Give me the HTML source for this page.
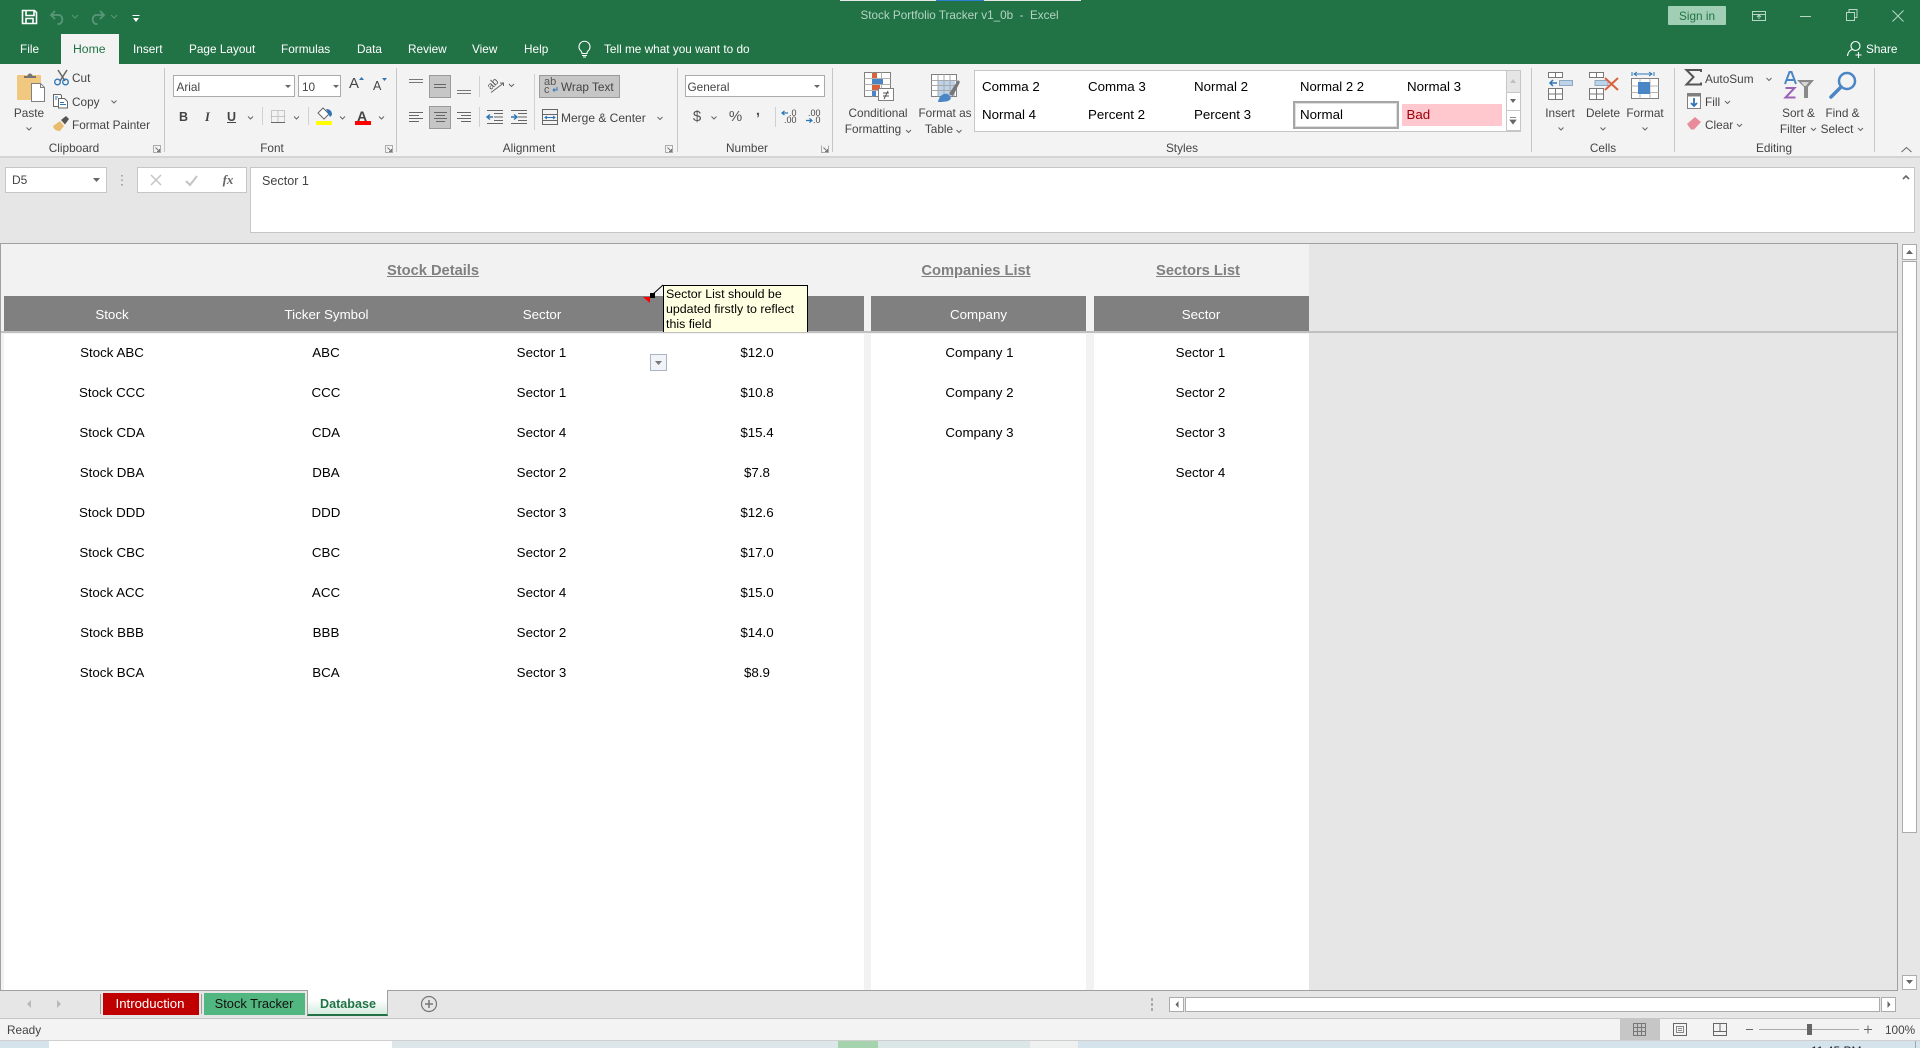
<!DOCTYPE html>
<html lang="en">
<head>
<meta charset="utf-8">
<title>Stock Portfolio Tracker v1_0b - Excel</title>
<style>
html,body{margin:0;padding:0;width:1920px;height:1048px;overflow:hidden;background:#e6e6e6}
body{position:relative;font-family:"Liberation Sans",Arial,sans-serif;font-size:11.8px;color:#444}
.b{position:absolute;box-sizing:border-box}
.t{position:absolute;line-height:16px;white-space:nowrap}
.c{transform:translateX(-50%)}
.w{color:#fff}
.cell{color:#000;font-size:13.33px}
.hd{color:#fff;font-size:13.33px}
.ttl{color:#808080;font-size:14.67px;font-weight:bold;text-decoration:underline}
.st{color:#000;font-size:13.33px}
.in{background:#fff;border:1px solid #ababab}
.sel{background:#c6c6c6;border:1px solid #9a9a9a}
svg{position:absolute;left:0;top:0;overflow:visible}
</style>
</head>
<body>
<!-- regions -->
<div class="b" style="left:0;top:0;width:1920px;height:64px;background:#217346"></div>
<div class="b" style="left:840px;top:0;width:96px;height:1px;background:#e8e8e8"></div>
<div class="b" style="left:936px;top:0;width:48px;height:1px;background:#2b7cd3"></div>
<div class="b" style="left:984px;top:0;width:97px;height:1px;background:#e8e8e8"></div>
<div class="b" style="left:61px;top:34px;width:58px;height:30px;background:#f3f3f3"></div>
<div class="b" style="left:0;top:64px;width:1920px;height:92px;background:#f3f3f3"></div>
<div class="b" style="left:0;top:156px;width:1920px;height:2px;background:#d4d4d4"></div>

<!-- title bar -->
<div class="t c" style="left:959.500px;top:8px;color:#b4d4c3;font-size:11.700px">Stock Portfolio Tracker v1_0b&nbsp; -&nbsp; Excel</div>
<div class="b" style="left:1668px;top:6px;width:58px;height:19px;background:#a0cfb5;border-radius:1px"></div>
<div class="t c" style="left:1697px;top:8px;color:#217346;font-size:11.8px">Sign in</div>

<!-- tabs -->
<div class="t w" style="left:20px;top:41px">File</div>
<div class="t" style="left:73px;top:41px;color:#217346;font-size:12.2px">Home</div>
<div class="t w" style="left:133px;top:41px">Insert</div>
<div class="t w" style="left:189px;top:41px">Page Layout</div>
<div class="t w" style="left:281px;top:41px">Formulas</div>
<div class="t w" style="left:357px;top:41px">Data</div>
<div class="t w" style="left:408px;top:41px">Review</div>
<div class="t w" style="left:472px;top:41px">View</div>
<div class="t w" style="left:524px;top:41px">Help</div>
<div class="t w" style="left:604px;top:41px">Tell me what you want to do</div>
<div class="t w" style="left:1866px;top:41px">Share</div>

<!-- Clipboard -->
<div class="t c" style="left:29px;top:105px">Paste</div>
<div class="t" style="left:72px;top:70px">Cut</div>
<div class="t" style="left:72px;top:94px">Copy</div>
<div class="t" style="left:72px;top:117px">Format Painter</div>
<div class="t c" style="left:74px;top:140px">Clipboard</div>

<!-- Font -->
<div class="b in" style="left:173px;top:75px;width:122px;height:22px"></div>
<div class="t" style="left:176.500px;top:79px">Arial</div>
<div class="b in" style="left:298px;top:75px;width:43px;height:22px"></div>
<div class="t" style="left:302px;top:79px">10</div>
<div class="t" style="left:349px;top:76px;font-size:15px">A</div>
<div class="t" style="left:373px;top:78px;font-size:12.5px">A</div>
<div class="t" style="left:179px;top:109px;font-weight:bold;font-size:12.5px">B</div>
<div class="t" style="left:205px;top:109px;font-style:italic;font-size:12.5px;font-family:'Liberation Serif',serif;font-weight:bold">I</div>
<div class="t" style="left:227px;top:109px;font-weight:bold;font-size:12.5px;text-decoration:underline">U</div>
<div class="t" style="left:357px;top:108px;font-weight:bold;font-size:14px;color:#444">A</div>
<div class="t c" style="left:272px;top:140px">Font</div>

<!-- Alignment -->
<div class="b sel" style="left:429px;top:75px;width:22px;height:23px"></div>
<div class="b sel" style="left:429px;top:106px;width:22px;height:23px"></div>
<div class="b sel" style="left:539px;top:75px;width:81px;height:23px"></div>
<div class="t" style="left:561px;top:79px">Wrap Text</div>
<div class="t" style="left:561px;top:110px;font-size:12px">Merge &amp; Center</div>
<div class="t" style="left:544px;top:77px;font-size:11px;line-height:10px;color:#555">ab</div>
<div class="t" style="left:544px;top:85px;font-size:11px;line-height:10px;color:#555">c</div>
<div class="t" style="left:487px;top:79px;font-size:10.5px;line-height:10px;color:#555;transform:rotate(-45deg)">ab</div>
<div class="t c" style="left:529px;top:140px">Alignment</div>

<!-- Number -->
<div class="b in" style="left:685px;top:75px;width:140px;height:22px"></div>
<div class="t" style="left:687.500px;top:79px">General</div>
<div class="t c" style="left:697px;top:109px;font-size:15px;color:#555">$</div>
<div class="t c" style="left:735.500px;top:109px;font-size:15px;color:#555">%</div>
<div class="t c" style="left:758px;top:103px;font-size:15px;font-weight:bold;color:#555">,</div>
<div class="t" style="left:789px;top:109px;font-size:9px;line-height:8px;color:#444">.0</div>
<div class="t" style="left:784px;top:116px;font-size:9px;line-height:8px;color:#444">.00</div>
<div class="t" style="left:808px;top:109px;font-size:9px;line-height:8px;color:#444">.00</div>
<div class="t" style="left:813px;top:116px;font-size:9px;line-height:8px;color:#444">.0</div>
<div class="t c" style="left:747px;top:140px">Number</div>

<!-- Styles -->
<div class="t c" style="left:878px;top:105px">Conditional</div>
<div class="t c" style="left:873px;top:121px">Formatting</div>
<div class="t c" style="left:945px;top:105px">Format as</div>
<div class="t c" style="left:939px;top:121px">Table</div>
<div class="b" style="left:974px;top:70px;width:547px;height:62px;background:#fff;border:1px solid #c6c6c6"></div>
<div class="t st" style="left:982px;top:79px">Comma 2</div>
<div class="t st" style="left:1088px;top:79px">Comma 3</div>
<div class="t st" style="left:1194px;top:79px">Normal 2</div>
<div class="t st" style="left:1300px;top:79px;font-size:13.1px">Normal 2 2</div>
<div class="t st" style="left:1407px;top:79px">Normal 3</div>
<div class="t st" style="left:982px;top:107px">Normal 4</div>
<div class="t st" style="left:1088px;top:107px">Percent 2</div>
<div class="t st" style="left:1194px;top:107px">Percent 3</div>
<div class="b" style="left:1293px;top:101px;width:106px;height:28px;background:#fff;border:2px solid #a6a6a6;box-shadow:inset 0 0 0 1px #e0e0e0"></div>
<div class="t st" style="left:1300px;top:107px">Normal</div>
<div class="b" style="left:1402px;top:104px;width:100px;height:22px;background:#ffc7ce"></div>
<div class="t st" style="left:1406.500px;top:107px;color:#9c0006">Bad</div>
<div class="b" style="left:1506px;top:71px;width:14px;height:21px;background:#e6e6e6;border-left:1px solid #c6c6c6"></div>
<div class="b" style="left:1506px;top:92px;width:14px;height:19px;background:#fff;border:1px solid #c6c6c6;border-right:0"></div>
<div class="b" style="left:1506px;top:110px;width:14px;height:21px;background:#fff;border:1px solid #c6c6c6;border-right:0"></div>
<div class="t c" style="left:1182px;top:140px">Styles</div>

<!-- Cells / Editing -->
<div class="t c" style="left:1560px;top:105px">Insert</div>
<div class="t c" style="left:1603px;top:105px">Delete</div>
<div class="t c" style="left:1645px;top:105px">Format</div>
<div class="t c" style="left:1603px;top:140px">Cells</div>
<div class="t" style="left:1705px;top:71px">AutoSum</div>
<div class="t" style="left:1705px;top:94px">Fill</div>
<div class="t" style="left:1705px;top:117px">Clear</div>
<div class="t c" style="left:1798.500px;top:105px">Sort &amp;</div>
<div class="t c" style="left:1793px;top:121px">Filter</div>
<div class="t c" style="left:1842.500px;top:105px">Find &amp;</div>
<div class="t c" style="left:1837px;top:121px">Select</div>
<div class="t c" style="left:1774px;top:140px">Editing</div>

<!-- formula bar -->
<div class="b" style="left:5px;top:167px;width:102px;height:26px;background:#fff;border:1px solid #c6c6c6"></div>
<div class="t" style="left:12px;top:172px;font-size:12px">D5</div>
<div class="b" style="left:137px;top:167px;width:110px;height:26px;background:#fff;border:1px solid #c6c6c6"></div>
<div class="t c" style="left:228px;top:172px;font-family:'Liberation Serif',serif;font-style:italic;font-weight:bold;font-size:13px;color:#666">fx</div>
<div class="b" style="left:250px;top:167px;width:1665px;height:66px;background:#fff;border:1px solid #c6c6c6"></div>
<div class="t" style="left:262px;top:172.500px;font-size:12.6px">Sector 1</div>

<!-- sheet -->
<div class="b" style="left:0;top:243px;width:1898px;height:748px;background:#e6e6e6;border:1px solid #a0a0a0;border-width:1px 1px 1px 1px"></div>
<div class="b" style="left:1px;top:244px;width:1308px;height:746px;background:#f2f2f2"></div>
<div class="b" style="left:4px;top:334px;width:860px;height:656px;background:#fff"></div>
<div class="b" style="left:871px;top:334px;width:215px;height:656px;background:#fff"></div>
<div class="b" style="left:1094px;top:334px;width:215px;height:656px;background:#fff"></div>
<div class="b" style="left:4px;top:296px;width:860px;height:35px;background:#808080"></div>
<div class="b" style="left:871px;top:296px;width:215px;height:35px;background:#808080"></div>
<div class="b" style="left:1094px;top:296px;width:215px;height:35px;background:#808080"></div>
<div class="b" style="left:1px;top:331px;width:1896px;height:2px;background:#c0c0c0"></div>

<div class="t c ttl" style="left:433px;top:263px">Stock Details</div>
<div class="t c ttl" style="left:976px;top:263px">Companies List</div>
<div class="t c ttl" style="left:1198px;top:263px">Sectors List</div>

<div class="t c hd" style="left:112px;top:307px">Stock</div>
<div class="t c hd" style="left:326.500px;top:307px">Ticker Symbol</div>
<div class="t c hd" style="left:542px;top:307px">Sector</div>
<div class="t c hd" style="left:978.500px;top:307px">Company</div>
<div class="t c hd" style="left:1201px;top:307px">Sector</div>

<div class="t c cell" style="left:112px;top:345px">Stock ABC</div><div class="t c cell" style="left:326px;top:345px">ABC</div><div class="t c cell" style="left:541.500px;top:345px">Sector 1</div><div class="t c cell" style="left:757px;top:345px">$12.0</div>
<div class="t c cell" style="left:112px;top:385px">Stock CCC</div><div class="t c cell" style="left:326px;top:385px">CCC</div><div class="t c cell" style="left:541.500px;top:385px">Sector 1</div><div class="t c cell" style="left:757px;top:385px">$10.8</div>
<div class="t c cell" style="left:112px;top:425px">Stock CDA</div><div class="t c cell" style="left:326px;top:425px">CDA</div><div class="t c cell" style="left:541.500px;top:425px">Sector 4</div><div class="t c cell" style="left:757px;top:425px">$15.4</div>
<div class="t c cell" style="left:112px;top:465px">Stock DBA</div><div class="t c cell" style="left:326px;top:465px">DBA</div><div class="t c cell" style="left:541.500px;top:465px">Sector 2</div><div class="t c cell" style="left:757px;top:465px">$7.8</div>
<div class="t c cell" style="left:112px;top:505px">Stock DDD</div><div class="t c cell" style="left:326px;top:505px">DDD</div><div class="t c cell" style="left:541.500px;top:505px">Sector 3</div><div class="t c cell" style="left:757px;top:505px">$12.6</div>
<div class="t c cell" style="left:112px;top:545px">Stock CBC</div><div class="t c cell" style="left:326px;top:545px">CBC</div><div class="t c cell" style="left:541.500px;top:545px">Sector 2</div><div class="t c cell" style="left:757px;top:545px">$17.0</div>
<div class="t c cell" style="left:112px;top:585px">Stock ACC</div><div class="t c cell" style="left:326px;top:585px">ACC</div><div class="t c cell" style="left:541.500px;top:585px">Sector 4</div><div class="t c cell" style="left:757px;top:585px">$15.0</div>
<div class="t c cell" style="left:112px;top:625px">Stock BBB</div><div class="t c cell" style="left:326px;top:625px">BBB</div><div class="t c cell" style="left:541.500px;top:625px">Sector 2</div><div class="t c cell" style="left:757px;top:625px">$14.0</div>
<div class="t c cell" style="left:112px;top:665px">Stock BCA</div><div class="t c cell" style="left:326px;top:665px">BCA</div><div class="t c cell" style="left:541.500px;top:665px">Sector 3</div><div class="t c cell" style="left:757px;top:665px">$8.9</div>

<div class="t c cell" style="left:979.500px;top:345px">Company 1</div><div class="t c cell" style="left:979.500px;top:385px">Company 2</div><div class="t c cell" style="left:979.500px;top:425px">Company 3</div>
<div class="t c cell" style="left:1200.500px;top:345px">Sector 1</div><div class="t c cell" style="left:1200.500px;top:385px">Sector 2</div><div class="t c cell" style="left:1200.500px;top:425px">Sector 3</div><div class="t c cell" style="left:1200.500px;top:465px">Sector 4</div>

<!-- comment -->
<div class="b" style="left:663px;top:285px;width:145px;height:47px;background:#ffffe1;border:1px solid #000;border-bottom:0"></div>
<div class="t" style="left:666px;top:287px;color:#000;font-size:12.4px;line-height:15px">Sector List should be<br>updated firstly to reflect<br>this field</div>
<div class="b" style="left:650px;top:354px;width:17px;height:17px;background:#f0f4f8;border:1px solid #a9b3c4"></div>

<!-- scrollbars -->
<div class="b" style="left:1898px;top:243px;width:22px;height:748px;background:#e6e6e6"></div>
<div class="b" style="left:1902px;top:244px;width:15px;height:16px;background:#fff;border:1px solid #ababab"></div>
<div class="b" style="left:1902px;top:261px;width:15px;height:572px;background:#fff;border:1px solid #ababab"></div>
<div class="b" style="left:1902px;top:975px;width:15px;height:15px;background:#fff;border:1px solid #ababab"></div>
<div class="b" style="left:1169px;top:997px;width:15px;height:15px;background:#fff;border:1px solid #ababab"></div>
<div class="b" style="left:1185px;top:997px;width:695px;height:15px;background:#fff;border:1px solid #ababab"></div>
<div class="b" style="left:1881px;top:997px;width:15px;height:15px;background:#fff;border:1px solid #ababab"></div>

<!-- sheet tabs -->
<div class="b" style="left:103px;top:993px;width:96px;height:22px;background:#c00000"></div>
<div class="t c w" style="left:150px;top:996px;font-size:13.2px">Introduction</div>
<div class="b" style="left:204px;top:993px;width:101px;height:22px;background:#52b680"></div>
<div class="t c" style="left:254px;top:996px;font-size:12.9px;color:#111">Stock Tracker</div>
<div class="b" style="left:307px;top:990px;width:81px;height:26px;background:linear-gradient(#fff 40%,#d5ebdf);border-left:1px solid #a0a0a0;border-right:1px solid #a0a0a0;border-bottom:2px solid #217346"></div>
<div class="t c" style="left:348px;top:996px;font-size:12.6px;font-weight:bold;color:#217346">Database</div>
<div class="b" style="left:100px;top:994px;width:1px;height:20px;background:#a0a0a0"></div>
<div class="b" style="left:201px;top:994px;width:1px;height:20px;background:#a0a0a0"></div>

<!-- status bar -->
<div class="b" style="left:0;top:1018px;width:1920px;height:22px;background:#f3f3f3;border-top:1px solid #c6c6c6"></div>
<div class="t" style="left:7px;top:1022px;font-size:11.8px">Ready</div>
<div class="b" style="left:1620px;top:1019px;width:40px;height:21px;background:#c6c6c6"></div>
<div class="t" style="left:1885px;top:1022px;font-size:11.8px">100%</div>

<!-- desktop strip -->
<div class="b" style="left:0;top:1040px;width:1920px;height:8px;background:#d5e3ec;border-top:1px solid #cfcfcf"></div>
<div class="b" style="left:49px;top:1041px;width:343px;height:7px;background:#fff"></div>
<div class="b" style="left:392px;top:1041px;width:446px;height:7px;background:#dde7ea"></div>
<div class="b" style="left:838px;top:1041px;width:40px;height:7px;background:#a5d3ae"></div>
<div class="b" style="left:878px;top:1041px;width:200px;height:7px;background:#dbe6e6"></div>
<div class="b" style="left:1030px;top:1041px;width:48px;height:7px;background:#eef1ef"></div>
<div class="t" style="left:1811px;top:1044px;font-size:12px;color:#222;height:4px;overflow:hidden;line-height:14px">11:45 PM</div>
<div class="b" style="left:1915px;top:1041px;width:1px;height:7px;background:#9aa"></div>

<!-- icons -->
<svg width="1920" height="1048" viewBox="0 0 1920 1048" fill="none">
 <!-- title bar icons -->
 <g stroke="#fff" stroke-width="1.6">
  <path d="M22.5 10.5h12l2 2v11h-14z"/><path d="M26 10.5v5h8v-5M26 23.5v-5h7v5"/>
 </g>
 <g stroke="#5a9679" stroke-width="1.8">
  <path d="M55 11l-4 4 4 4M51.5 15h8a5 5 0 0 1 0 9h-2"/><path d="M100 11l4 4-4 4M103.5 15h-8a5 5 0 0 0 0 9h2"/>
  <path d="M72 15l3 3 3-3M111 15l3 3 3-3" stroke-width="1"/>
 </g>
 <path d="M132.500 15.500h7" stroke="#fff"/><path d="M133 18h6l-3 4z" fill="#fff"/>
 <g stroke="#b8d6c6" stroke-width="1">
  <rect x="1752.500" y="11.500" width="13" height="9"/><path d="M1752.500 14.500h13M1759 19v-4M1757 17l2-2 2 2"/>
  <path d="M1800 16.500h11"/><path d="M1846.500 12.500h8v8h-8zM1849 12v-2.500h8v8h-2.500"/>
  <path d="M1892.500 10.500l11 11M1903.500 10.500l-11 11"/>
 </g>
 <!-- bulb -->
 <path d="M581 51a5.500 5.500 0 1 1 7 0c-.7.7-1 1.300-1 2.500h-5c0-1.200-.3-1.800-1-2.500zM582 55.500h5M583 57h3" stroke="#fff" stroke-width="1.100"/>
 <!-- share -->
 <circle cx="1855.500" cy="46" r="4.500" stroke="#fff" stroke-width="1.100"/>
 <path d="M1847.500 56c.5-4 2.500-6 5-6.500M1858.500 52v6M1855.500 55h6" stroke="#fff" stroke-width="1.100"/>

 <!-- separators -->
 <path d="M164.500 68v84M396.500 68v84M677.500 68v84M832.500 68v84M1531.500 68v84M1674.500 68v84M1874.500 68v84" stroke="#c6c6c6"/>
 <path d="M262.500 107v18M308.500 107v18M479.500 76v21M479.500 107v20M534.500 74v56M775.500 107v20" stroke="#d0d0d0"/>

 <!-- paste -->
 <rect x="17" y="75" width="24" height="25" rx="1" fill="#f0c87f"/>
 <path d="M24 78v-2h3.500a2.500 2.500 0 0 1 5 0H36v2z" fill="#757575"/>
 <path d="M31.500 83.500h9l4 4v14h-13z" fill="#fff" stroke="#808080"/>
 <path d="M40.500 83.500v4h4" stroke="#808080"/>
 <!-- cut -->
 <path d="M58 70l7 11M67 70l-7 11" stroke="#666" stroke-width="1.500"/>
 <circle cx="57.500" cy="82" r="2.800" stroke="#2e75b6" stroke-width="1.300"/><circle cx="65.500" cy="82" r="2.800" stroke="#2e75b6" stroke-width="1.300"/>
 <!-- copy -->
 <path d="M53.500 94.500h7l1 1v11h-8z" fill="#fff" stroke="#666"/>
 <path d="M58.500 98.500h6l3 3v6.500h-9z" fill="#fff" stroke="#666"/>
 <path d="M60 102.500h4M60 104.500h6M55 97h3M55 99h2" stroke="#2e75b6"/>
 <!-- painter -->
 <path d="M53 126l7-5 4 5-4 5c-3 0-6-1-7-5z" fill="#e8bb6f"/><path d="M61 120l5-4 3 3-4 5.500z" fill="#555"/>

 <!-- chevrons -->
 <g stroke="#666" stroke-width="1">
  <path d="M26.500 127.500l2.500 2.500 2.500-2.500M111.500 100.500l2.500 2.500 2.500-2.500M248 116.500l2.500 2.500 2.500-2.500M294 116.500l2.500 2.500 2.500-2.500M340 116.500l2.500 2.500 2.500-2.500M379 116.500l2.500 2.500 2.500-2.500M509 84l2.500 2.500 2.500-2.500M657.500 117l2.500 2.500 2.500-2.500M711.500 116.500l2.500 2.500 2.500-2.500M906 130l2.500 2.500 2.500-2.500M956.500 130l2.500 2.500 2.500-2.500"/>
  <path d="M1558.500 127.500l2.500 2.500 2.500-2.500M1600.500 127.500l2.500 2.500 2.500-2.500M1642.500 127.500l2.500 2.500 2.500-2.500M1766.500 78l2.500 2.500 2.500-2.500M1725 101l2.500 2.500 2.500-2.500M1737 124l2.500 2.500 2.500-2.500M1811 128l2.500 2.500 2.500-2.500M1858 128l2.500 2.500 2.500-2.500"/>
 </g>
 <!-- drop arrows -->
 <path d="M285 85h6l-3 3zM333 85h6l-3 3zM814 85h6l-3 3zM93 178h7l-3.500 4z" fill="#666"/>
 <!-- launchers -->
 <g stroke="#777">
  <path d="M153.500 145.500v7h7v-7zM385.500 145.500v7h7v-7zM665.500 145.500v7h7v-7zM821.500 145.500v7h7v-7" stroke="#aaa"/>
  <path d="M155.500 147.500l4 4M159.500 149v2.500h-2.500M387.500 147.500l4 4M391.500 149v2.500h-2.500M667.500 147.500l4 4M671.500 149v2.500h-2.500M823.500 147.500l4 4M827.500 149v2.500h-2.500"/>
 </g>
 <!-- grow/shrink font -->
 <path d="M359 80l2.500-3 2.500 3z" fill="#2e75b6"/><path d="M382 78l2.500 3 2.500-3z" fill="#2e75b6"/>
 <!-- borders -->
 <path d="M271.500 110.500h13v12h-13zM278 110.500v12M271.500 116.500h13" stroke="#999" stroke-dasharray="1 1"/><path d="M271 122.500h14" stroke="#666"/>
 <!-- fill color -->
 <path d="M323 108l6 6-5 5-6-6z" fill="#fff" stroke="#666"/><path d="M326 109c4 0 6 2 6 6l-2 2z" fill="#2e75b6"/>
 <rect x="316" y="121" width="16" height="4" fill="#ffff00"/>
 <rect x="355" y="121" width="16" height="4" fill="#ff0000"/>
 <!-- alignment lines -->
 <g stroke="#666">
  <path d="M409 79.500h14M409 82.500h14" stroke="#777"/>
  <path d="M434 84.500h12M434 87.500h12"/>
  <path d="M457 90.500h14M457 93.500h14" stroke="#777"/>
  <path d="M409 112.500h14M409 115.500h10M409 118.500h14M409 121.500h10"/>
  <path d="M434 112.500h13M436 115.500h9M434 118.500h13M436 121.500h9"/>
  <path d="M457 112.500h14M461 115.500h10M457 118.500h14M461 121.500h10"/>
  <path d="M494 113.500h9M494 117h9M494 120.500h9M487 123.500h16M518 113.500h9M518 117h9M518 120.500h9M511 123.500h16M487 110.500h16M511 110.500h16"/>
 </g>
 <path d="M487 117h6M490 114.500l-3 2.500 3 2.500" stroke="#2e75b6" stroke-width="1.400"/>
 <path d="M511 117h6M514 114.500l3 2.500-3 2.500" stroke="#2e75b6" stroke-width="1.400"/>
 <!-- orientation -->
 <path d="M491 92.500l12-9M500 83h3.500v3" stroke="#666"/>
 <!-- wrap -->
 <path d="M553 90h4v-3M553 90l1.500-1.500M553 90l1.500 1.500" stroke="#2e75b6"/>
 <!-- merge -->
 <rect x="542.500" y="109.500" width="15" height="15" stroke="#666"/>
 <path d="M542.500 114.500h15M542.500 120.500h15" stroke="#666"/>
 <path d="M545 117.500h10M547 116l-2 1.500 2 1.500M553 116l2 1.500-2 1.500" stroke="#2e75b6"/>
 <!-- decimals -->
 <path d="M782 113h6M784.500 111l-2.500 2 2.500 2M806 120.500h6M809.500 118.500l2.500 2-2.500 2" stroke="#2e75b6" stroke-width="1.200"/>
 <!-- conditional formatting -->
 <rect x="864.500" y="72.500" width="26" height="24" fill="#fff" stroke="#808080"/>
 <path d="M864.500 78.500h26M864.500 84.500h26M864.500 90.500h26M872.500 72.500v24M881.500 72.500v24" stroke="#b0b0b0"/>
 <rect x="872" y="73" width="5" height="5" fill="#d9623d"/><rect x="872" y="79" width="11" height="5" fill="#4a86c5"/><rect x="872" y="85" width="8" height="5" fill="#d9623d"/><rect x="872" y="91" width="4" height="5" fill="#4a86c5"/>
 <rect x="878.500" y="88.500" width="15" height="12" fill="#fff" stroke="#808080"/>
 <path d="M883 93h6M883 96h6M888 91l-4 8" stroke="#555"/>
 <!-- format as table -->
 <rect x="931.500" y="74.500" width="25" height="22" fill="#fff" stroke="#808080"/>
 <rect x="938" y="80" width="17" height="16" fill="#bcd3ea"/>
 <path d="M931.500 80.500h25M931.500 85.500h25M931.500 90.500h25M938 74.500v22M944 74.500v22M950 74.500v22" stroke="#a8a8a8"/>
 <path d="M949 94l9-14 2 2-7 14z" fill="#777"/>
 <path d="M938 102c1-6 5-9 10-8l3 4c-1 3-4 4-13 4z" fill="#4a86c5"/>
 <!-- style scroll arrows -->
 <path d="M1510 83l3-4 3 4z" fill="#c0c0c0"/><path d="M1510 99h6l-3 4z" fill="#666"/><path d="M1510 117.500h6M1510 120h6l-3 4z" stroke="#666" fill="#666" stroke-width=".8"/>
 <!-- insert -->
 <g stroke="#777" fill="#fff">
  <rect x="1548.500" y="72.500" width="14" height="5"/><path d="M1555.500 72.500v5"/>
  <rect x="1548.500" y="88.500" width="14" height="11"/><path d="M1555.500 88.500v11M1548.500 94h14"/>
 </g>
 <rect x="1559.500" y="80.500" width="13" height="5" fill="#bcd3ea" stroke="#8fa8c0"/>
 <path d="M1550 83h7M1553 80l-3 3 3 3" stroke="#2e75b6" stroke-width="1.500"/>
 <!-- delete -->
 <g stroke="#777" fill="#fff">
  <rect x="1589.500" y="72.500" width="14" height="5"/><path d="M1596.500 72.500v5"/>
  <rect x="1589.500" y="88.500" width="14" height="11"/><path d="M1596.500 88.500v11M1589.500 94h14"/>
 </g>
 <rect x="1595" y="80.500" width="13" height="5" fill="#bcd3ea" stroke="#8fa8c0"/>
 <path d="M1605 78l13 12M1618 78l-13 12" stroke="#d9623d" stroke-width="2"/>
 <!-- format -->
 <path d="M1632 72v4M1654 72v4M1634 74h18M1637 72l-3 2 3 2M1649 72l3 2-3 2" stroke="#2e75b6"/>
 <rect x="1631.500" y="78.500" width="27" height="20" fill="#fff" stroke="#808080"/>
 <path d="M1631.500 86h27M1631.500 92.500h27M1640 78.500v20M1650 78.500v20" stroke="#b5b5b5"/>
 <rect x="1638" y="82" width="12" height="12" fill="#4a86c5"/>
 <!-- autosum -->
 <path d="M1701 72v-2h-14.500l7 7-7 7.500h14.500v-2" stroke="#555" stroke-width="2"/>
 <!-- fill -->
 <rect x="1687.500" y="93.500" width="13" height="15" fill="#fff" stroke="#808080"/><rect x="1687.500" y="93.500" width="13" height="3" fill="#808080"/>
 <path d="M1694 98v8M1691 103l3 3 3-3" stroke="#2e75b6" stroke-width="1.800"/>
 <!-- clear -->
 <path d="M1687 124l8-7 6 5-7 7.500h-3z" fill="#e98b9a"/>
 <!-- sort -->
 <path d="M1785 84l4.500-12h2l4.500 12M1787 80h7" stroke="#4a86c5" stroke-width="2"/>
 <path d="M1785.500 88h9l-9 9.500h10" stroke="#9a63b5" stroke-width="2"/>
 <path d="M1797 80h17l-6 7v11h-4V87z" fill="#8a8a8a"/>
 <path d="M1801 82h8l-3 4h-2z" fill="#d6d6d6"/>
 <!-- find -->
 <circle cx="1847" cy="81" r="8" stroke="#4a86c5" stroke-width="2.500"/>
 <path d="M1841 87l-10 10" stroke="#4a86c5" stroke-width="3.500" stroke-linecap="round"/>
 <!-- collapse -->
 <path d="M1901.500 152l5-4.500 5 4.500" stroke="#666"/>
 <!-- formula bar icons -->
 <path d="M122 175v1.500M122 179.500v1.500M122 184v1.500" stroke="#aaa" stroke-width="2"/>
 <path d="M151 175l10 10M161 175l-10 10" stroke="#c4c4c4" stroke-width="1.500"/>
 <path d="M186 181l4 4 7-9" stroke="#c4c4c4" stroke-width="2"/>
 <path d="M1903 179l3-3 3 3" stroke="#666" stroke-width="1.600"/>
 <!-- comment connectors -->
 <path d="M663 285l-11 10" stroke="#000"/>
 <rect x="650" y="293" width="5" height="5" fill="#000"/>
 <path d="M643 297h7v6z" fill="#ff0000"/>
 <path d="M655 361h7l-3.500 4z" fill="#777"/>
 <!-- scroll arrows -->
 <path d="M1906 254l3.500-4 3.500 4zM1906 980h7l-3.500 4zM1178.500 1001v7l-3-3.500zM1887.500 1001v7l3-3.500z" fill="#666"/>
 <path d="M31 1000v8l-4-4zM57 1000v8l4-4z" fill="#b8b8b8"/>
 <path d="M1152 998v3M1152 1003v3M1152 1008v3" stroke="#aaa" stroke-width="2"/>
 <!-- add sheet -->
 <circle cx="429" cy="1004" r="7.500" stroke="#777" stroke-width="1.200"/>
 <path d="M425 1004h8M429 1000v8" stroke="#777" stroke-width="1.500"/>
 <!-- view buttons -->
 <g stroke="#666">
  <path d="M1633.500 1023.500h12v12h-12zM1633.500 1027.500h12M1633.500 1031.500h12M1637.500 1023.500v12M1641.500 1023.500v12" stroke="#777"/>
  <path d="M1673.500 1023.500h13v12h-13z"/><path d="M1676.500 1026.500h7v6h-7zM1678 1028.500h4M1678 1030.500h4" stroke="#888"/>
  <path d="M1713.500 1023.500h13v12h-13zM1713.500 1031.500h13M1720 1023.500v8"/>
  <path d="M1746 1029.500h7M1864 1029.500h8M1868 1025.500v8"/>
 </g>
 <path d="M1759 1029.500h100" stroke="#aaa"/>
 <rect x="1807" y="1024" width="5" height="11" fill="#666"/>
</svg>
</body>
</html>
